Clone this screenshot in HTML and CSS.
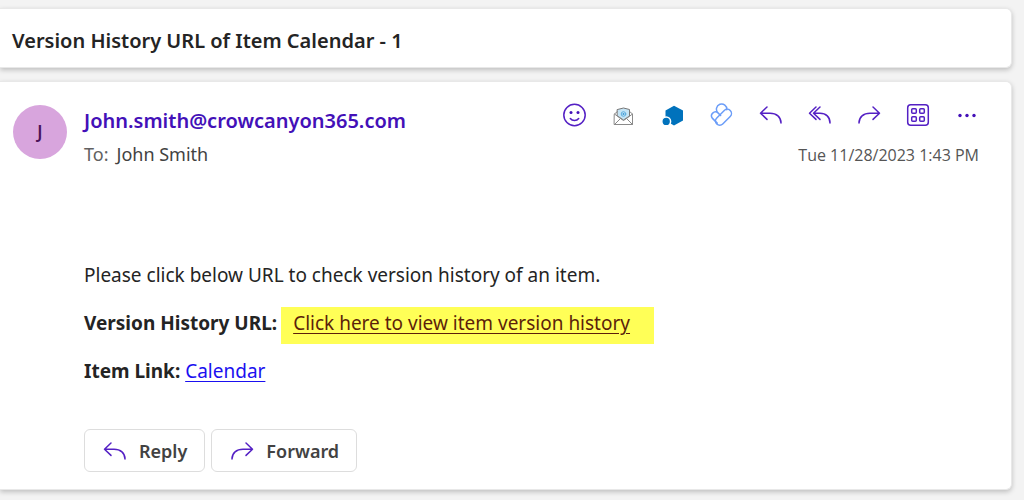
FILE: index.html
```html
<!DOCTYPE html>
<html lang="en">
<head>
<meta charset="utf-8">
<title>Version History URL of Item Calendar - 1</title>
<link rel="stylesheet" href="styles.css">
</head>
<body>
<header class="card subject"><h1 class="subject-title">Version History URL of Item Calendar - 1</h1></header>
<main class="card message">
  <div class="message-head">
    <div class="avatar">J</div>
    <div class="people">
      <div class="sender">John.smith@crowcanyon365.com</div>
      <div class="recipient"><span class="to">To:</span><span>John Smith</span></div>
    </div>
    <div class="meta">
      <div class="toolbar">
        <button class="icon-button" aria-label="React"><svg class="icon" viewBox="0 0 24 24"><circle cx="11.500" cy="12" r="10.700"/><path d="M7.300 15.500c2 2.600 6.400 2.600 8.400 0"/><circle class="solid" cx="8" cy="9.500" r="1.500"/><circle class="solid" cx="15" cy="9.500" r="1.500"/></svg></button>
        <button class="icon-button" aria-label="Mail add-in"><svg class="icon mail" viewBox="0 0 24 24"><path class="envelope" d="M2.500 11 6 8h11l3.500 3v10.500h-18z"/><path class="letter" d="M5.500 6.500 11.500 5l6 1.500v6.500l-6 4-6-4z"/><path class="envelope-line" d="M2.500 11l6 4.500-6 6M20.500 11l-6 4.500 6 6M8.500 15.500l3 2 3-2"/><circle class="at" cx="11.500" cy="11" r="2.300"/><circle class="at-core" cx="11.500" cy="11" r="1"/></svg></button>
        <button class="icon-button" aria-label="Hexagon add-in"><svg class="icon" viewBox="0 0 24 24"><path class="hex" d="M13 2.800l9 4.800v10l-9 4.800-8.500-4.800v-10z"/><circle class="hex-dot" cx="5.200" cy="18.400" r="4.400"/></svg></button>
        <button class="icon-button" aria-label="Link add-in"><svg class="icon loop" viewBox="0 0 24 24"><rect x="4" y="10" width="19" height="8.400" rx="4.200" transform="rotate(-45 13.500 14.200)"/><path d="M10.600 12.500 8 9.900a3.900 3.900 0 0 0-5.500 5.500l4.700 4.700M8 9.900a5.200 5.200 0 1 1 8.800-3.200"/></svg></button>
        <button class="icon-button" aria-label="Reply"><svg class="icon" viewBox="0 0 24 24"><path d="M8 4 1.500 10.200 8 16.400M1.500 10.200H11C17.500 10.200 22 14 22 20"/></svg></button>
        <button class="icon-button" aria-label="Reply all"><svg class="icon" viewBox="0 0 24 24"><path d="M8 4 1.500 10.200 8 16.400M12 4 5.500 10.200l6.500 6.200M5.500 10.200H12c6 0 10 3.800 10 9.800"/></svg></button>
        <button class="icon-button" aria-label="Forward"><svg class="icon" viewBox="0 0 24 24"><path d="M16 4 22.500 10.200 16 16.400M22.500 10.200H13C6.500 10.200 2 14 2 20"/></svg></button>
        <button class="icon-button" aria-label="Apps"><svg class="icon" viewBox="0 0 24 24"><rect x="1.700" y="1.700" width="20.600" height="20.600" rx="3"/><rect x="5.700" y="5.700" width="4.600" height="4.600" rx="1"/><rect x="13.700" y="5.700" width="4.600" height="4.600" rx="1"/><rect x="5.700" y="13.700" width="4.600" height="4.600" rx="1"/><rect x="13.700" y="13.700" width="4.600" height="4.600" rx="1"/></svg></button>
        <button class="icon-button" aria-label="More actions"><svg class="icon" viewBox="0 0 24 24"><g class="dots"><circle cx="5" cy="12.500" r="1.700"/><circle cx="12" cy="12.500" r="1.700"/><circle cx="19" cy="12.500" r="1.700"/></g></svg></button>
      </div>
      <time class="date" datetime="2023-11-28T13:43">Tue 11/28/2023 1:43 PM</time>
    </div>
  </div>
  <div class="message-body">
    <p>Please click below URL to check version history of an item.</p>
    <p><strong>Version History URL:</strong><span class="highlight"><a class="visited" href="#history">Click here to view item version history</a></span></p>
    <p><strong>Item Link:</strong> <a href="#calendar">Calendar</a></p>
  </div>
  <div class="actions">
    <button class="action"><svg class="icon" viewBox="0 0 24 24"><path d="M8 4 1.500 10.200 8 16.400M1.500 10.200H11C17.500 10.200 22 14 22 20"/></svg>Reply</button>
    <button class="action"><svg class="icon" viewBox="0 0 24 24"><path d="M16 4 22.500 10.200 16 16.400M22.500 10.200H13C6.500 10.200 2 14 2 20"/></svg>Forward</button>
  </div>
</main>
</body>
</html>
```
FILE: styles.css
```css
* { box-sizing: border-box; }
body { margin: 0; padding: 8px 12px 10px 0; background: #f3f3f3; color: #242424; font-family: "Noto Sans", "Open Sans", sans-serif; font-size: 19px; line-height: 28px; }
.card { background: #fff; border: 1px solid #e8e8e8; border-left: 0; border-radius: 0 6px 6px 0; box-shadow: 0 2px 5px rgba(0, 0, 0, 0.22); }
.subject { padding: 18px 12px 12px; margin-bottom: 13px; }
.subject-title { margin: 0; font-size: 20px; line-height: 28px; font-weight: 600; }
.message { padding: 21px 32px 17px 13px; }
.message-head { display: flex; align-items: flex-start; }
.avatar { display: grid; place-items: center; width: 54px; height: 54px; margin: 2px 17px 0 0; border-radius: 50%; background: #d8a5dd; color: #4a1259; font-size: 17px; font-weight: 600; }
.people { flex: 1; padding-top: 4px; }
.sender { color: #4310b8; font-size: 20px; font-weight: 600; }
.recipient { display: flex; gap: 8px; padding-top: 5px; font-size: 18px; color: #424242; }
.to { color: #616161; }
.meta { display: flex; flex-direction: column; align-items: flex-end; }
.toolbar { display: flex; gap: 25px; }
.icon-button { display: block; padding: 0; border: 0; background: none; }
.icon { display: block; width: 24px; height: 24px; fill: none; stroke: #5420c4; stroke-width: 1.5; stroke-linecap: round; stroke-linejoin: round; }
.solid, .dots { fill: #4310b8; stroke: none; }
.mail { stroke-width: 1; }
.envelope { fill: #fff; stroke: #8a8a8a; }
.envelope-line { stroke: #8a8a8a; }
.letter { fill: #c5e4f5; stroke: #777; }
.at { stroke: #5baee0; }
.at-core { fill: #3d9bd4; stroke: none; }
.hex { fill: #0072bc; stroke: none; }
.hex-dot { fill: #0072bc; stroke: #fff; }
.loop { stroke: #6b9df8; }
.date { padding-top: 14px; font-family: "Open Sans", "Noto Sans", sans-serif; font-size: 16px; color: #555; }
.message-body { padding: 92px 0 0 71px; }
.message-body p { margin: 0 0 20px; }
.message-body a { color: #1a0ff0; text-underline-offset: 3px; }
.highlight { display: inline-block; padding: 2px 24px 7px 12px; margin: -2px 0 -7px 4px; background: #ffff57; }
.message-body .visited { color: #5c1f0a; }
.actions { display: flex; gap: 6px; padding: 24px 0 0 71px; }
.action { display: flex; align-items: center; gap: 12px; height: 43px; padding: 0 17px 0 18px; border: 1px solid #ddd; border-radius: 6px; background: #fff; color: #424242; font: inherit; font-size: 18px; font-weight: 600; }
```
